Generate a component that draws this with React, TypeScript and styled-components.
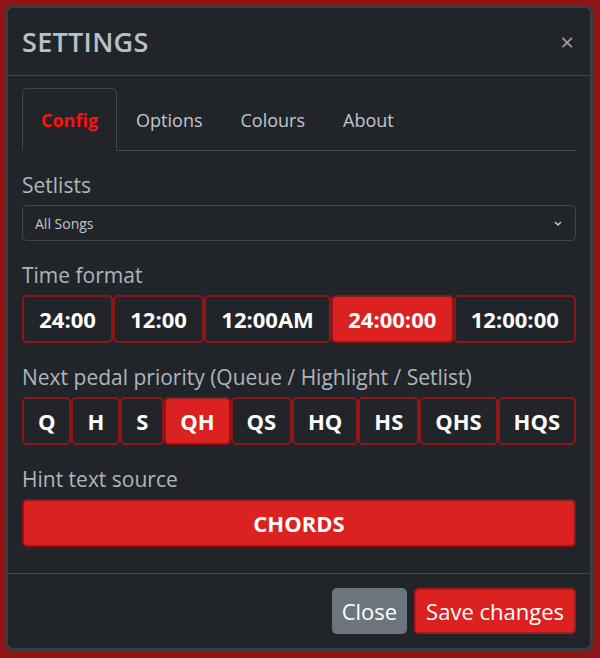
import * as React from "react";
import styled, { createGlobalStyle } from "styled-components";

const Global = createGlobalStyle`
  html, body { margin: 0; background: #8f1616; }
  body { font-family: "Open Sans", "Noto Sans", sans-serif; }
`;

const Modal = styled.div`
  margin: 5px 7px 0 5px;
  height: 646px;
  box-sizing: border-box;
  background: #212529;
  border: 3px solid #3a3d41;
  border-radius: 8px;
  display: flex;
  flex-direction: column;
  color: #adb5bd;
`;

const Header = styled.div`
  display: flex;
  align-items: center;
  justify-content: space-between;
  height: 67px;
  padding: 0 16px 0 14px;
  border-bottom: 1px solid #43474c;
`;

const Title = styled.h1`
  margin: 0;
  font-size: 27px;
  font-weight: 600;
  letter-spacing: 0.3px;
  color: #b8c0c8;
`;

const CloseX = styled.span`
  font-size: 24px;
  color: #9aa1a8;
`;

const Body = styled.div`
  flex: 1;
  padding: 12px 14px 0 14px;
`;

const Tabs = styled.div`
  display: flex;
  border-bottom: 1px solid #43474c;
  height: 62px;
`;

const Tab = styled.div<{ $active?: boolean }>`
  padding: 0 18px;
  display: flex;
  align-items: center;
  font-size: 18px;
  font-weight: ${(p) => (p.$active ? 700 : 400)};
  color: ${(p) => (p.$active ? "#ff1010" : "#c0c6cc")};
  border: 1px solid ${(p) => (p.$active ? "#43474c" : "transparent")};
  border-bottom: ${(p) => (p.$active ? "1px solid #212529" : "none")};
  border-radius: 5px 5px 0 0;
  margin-bottom: -1px;
`;

const Label = styled.div`
  font-size: 21px;
  margin: 22px 0 8px;
  line-height: 24px;
`;

const Select = styled.div`
  height: 34px;
  border: 1px solid #43474c;
  border-radius: 5px;
  display: flex;
  align-items: center;
  justify-content: space-between;
  padding: 0 12px;
  font-size: 14px;
  color: #c0c6cc;
`;

const Group = styled.div`
  display: flex;
`;

const Btn = styled.div<{ $on?: boolean }>`
  flex: 1 1 auto;
  height: 48px;
  box-sizing: border-box;
  display: flex;
  align-items: center;
  justify-content: center;
  padding: 0 10px;
  border: 2px solid #8f1616;
  border-radius: 5px;
  background: ${(p) => (p.$on ? "#dc2121" : "#212529")};
  color: #fff;
  font-weight: 700;
  font-size: 22px;
`;

const Footer = styled.div`
  border-top: 1px solid #43474c;
  height: 74px;
  display: flex;
  justify-content: flex-end;
  align-items: center;
  gap: 7px;
  padding: 0 14px;
  margin-top: 24px;
`;

const FootBtn = styled.div<{ $primary?: boolean }>`
  height: 46px;
  box-sizing: border-box;
  padding: 0 10px;
  display: flex;
  align-items: center;
  font-size: 22px;
  color: #fff;
  border-radius: 5px;
  background: ${(p) => (p.$primary ? "#dc2121" : "#6c757d")};
  border: ${(p) => (p.$primary ? "2px solid #a81a1a" : "none")};
`;

export default function App() {
  return (
    <>
      <Global />
      <Modal>
        <Header>
          <Title>SETTINGS</Title>
          <CloseX>×</CloseX>
        </Header>
        <Body>
          <Tabs>
            <Tab $active>Config</Tab>
            <Tab>Options</Tab>
            <Tab>Colours</Tab>
            <Tab>About</Tab>
          </Tabs>
          <Label>Setlists</Label>
          <Select>
            <span>All Songs</span>
            <svg width="10" height="10" viewBox="0 0 10 10">
              <path d="M2 4l3 3 3-3" stroke="#c0c6cc" strokeWidth="1.5" fill="none" />
            </svg>
          </Select>
          <Label>Time format</Label>
          <Group>
            {["24:00", "12:00", "12:00AM", "24:00:00", "12:00:00"].map((t) => (
              <Btn key={t} $on={t === "24:00:00"}>{t}</Btn>
            ))}
          </Group>
          <Label>Next pedal priority (Queue / Highlight / Setlist)</Label>
          <Group>
            {["Q", "H", "S", "QH", "QS", "HQ", "HS", "QHS", "HQS"].map((t) => (
              <Btn key={t} $on={t === "QH"}>{t}</Btn>
            ))}
          </Group>
          <Label>Hint text source</Label>
          <Group>
            <Btn $on>CHORDS</Btn>
          </Group>
        </Body>
        <Footer>
          <FootBtn>Close</FootBtn>
          <FootBtn $primary>Save changes</FootBtn>
        </Footer>
      </Modal>
    </>
  );
}
